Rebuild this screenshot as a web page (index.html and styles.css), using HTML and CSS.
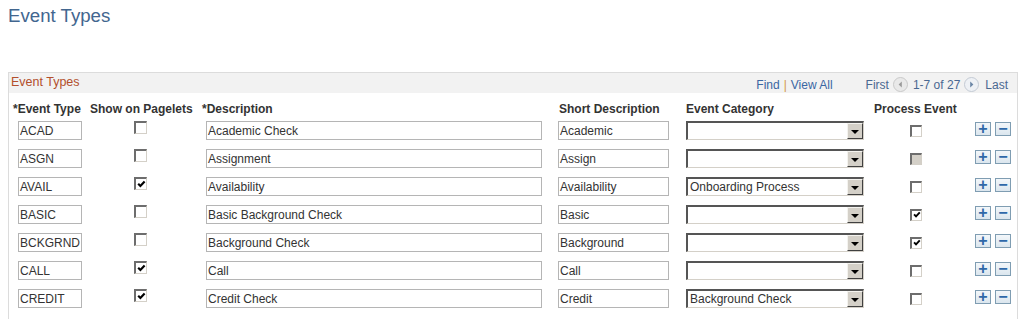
FILE: index.html
```html
<!DOCTYPE html>
<html lang="en">
<head>
  <meta charset="UTF-8" />
  <title>Event Types</title>
  <link rel="stylesheet" href="styles.css">
</head>
<body>
  <h1 class="page-title">Event Types</h1>

  <div class="grid">
    <div class="grid-bar">
      <span class="grid-title">Event Types</span>
      <div class="grid-nav">
        <a class="link">Find</a><span class="sep">|</span><a class="link">View All</a>
        <span class="nav-text first">First</span>
        <svg class="nav-arrow" width="15" height="15" viewBox="0 0 15 15"><circle cx="7.5" cy="7.5" r="7" fill="#e9e9e9" stroke="#c9c9c9"/><path d="M8.8 4.5 L5.6 7.5 L8.8 10.5 Z" fill="#9a9a9a"/></svg>
        <span class="nav-text count">1-7 of 27</span>
        <svg class="nav-arrow" width="15" height="15" viewBox="0 0 15 15"><circle cx="7.5" cy="7.5" r="7" fill="#eef1f5" stroke="#c3cad3"/><path d="M6.2 4.5 L9.4 7.5 L6.2 10.5 Z" fill="#6b86a6"/></svg>
        <span class="nav-text last">Last</span>
      </div>
    </div>

    <div class="grid-head">
      <div class="h-type">*Event Type</div>
      <div class="h-show">Show on Pagelets</div>
      <div class="h-desc">*Description</div>
      <div class="h-short">Short Description</div>
      <div class="h-cat">Event Category</div>
      <div class="h-proc">Process Event</div>
      <div></div>
    </div>

    <div class="grid-rows">
      <div class="grid-row">
        <div><span class="field f-type">ACAD</span></div>
        <div><span class="check c-show"></span></div>
        <div><span class="field f-desc">Academic Check</span></div>
        <div><span class="field f-short">Academic</span></div>
        <div><span class="select"><span class="select-text"></span><span class="select-btn"></span></span></div>
        <div class="proc-cell"><span class="check c-proc"></span></div>
        <div class="actions"><span class="btn">+</span><span class="btn">&minus;</span></div>
      </div>
      <div class="grid-row">
        <div><span class="field f-type">ASGN</span></div>
        <div><span class="check c-show"></span></div>
        <div><span class="field f-desc">Assignment</span></div>
        <div><span class="field f-short">Assign</span></div>
        <div><span class="select"><span class="select-text"></span><span class="select-btn"></span></span></div>
        <div class="proc-cell"><span class="check c-proc disabled"></span></div>
        <div class="actions"><span class="btn">+</span><span class="btn">&minus;</span></div>
      </div>
      <div class="grid-row">
        <div><span class="field f-type">AVAIL</span></div>
        <div><span class="check c-show checked"><svg viewBox="0 0 9 9"><polyline points="1.2,3.8 3.4,6 7.6,1.6"/></svg></span></div>
        <div><span class="field f-desc">Availability</span></div>
        <div><span class="field f-short">Availability</span></div>
        <div><span class="select"><span class="select-text">Onboarding Process</span><span class="select-btn"></span></span></div>
        <div class="proc-cell"><span class="check c-proc"></span></div>
        <div class="actions"><span class="btn">+</span><span class="btn">&minus;</span></div>
      </div>
      <div class="grid-row">
        <div><span class="field f-type">BASIC</span></div>
        <div><span class="check c-show"></span></div>
        <div><span class="field f-desc">Basic Background Check</span></div>
        <div><span class="field f-short">Basic</span></div>
        <div><span class="select"><span class="select-text"></span><span class="select-btn"></span></span></div>
        <div class="proc-cell"><span class="check c-proc checked"><svg viewBox="0 0 9 9"><polyline points="1.2,3.8 3.4,6 7.6,1.6"/></svg></span></div>
        <div class="actions"><span class="btn">+</span><span class="btn">&minus;</span></div>
      </div>
      <div class="grid-row">
        <div><span class="field f-type">BCKGRND</span></div>
        <div><span class="check c-show"></span></div>
        <div><span class="field f-desc">Background Check</span></div>
        <div><span class="field f-short">Background</span></div>
        <div><span class="select"><span class="select-text"></span><span class="select-btn"></span></span></div>
        <div class="proc-cell"><span class="check c-proc checked"><svg viewBox="0 0 9 9"><polyline points="1.2,3.8 3.4,6 7.6,1.6"/></svg></span></div>
        <div class="actions"><span class="btn">+</span><span class="btn">&minus;</span></div>
      </div>
      <div class="grid-row">
        <div><span class="field f-type">CALL</span></div>
        <div><span class="check c-show checked"><svg viewBox="0 0 9 9"><polyline points="1.2,3.8 3.4,6 7.6,1.6"/></svg></span></div>
        <div><span class="field f-desc">Call</span></div>
        <div><span class="field f-short">Call</span></div>
        <div><span class="select"><span class="select-text"></span><span class="select-btn"></span></span></div>
        <div class="proc-cell"><span class="check c-proc"></span></div>
        <div class="actions"><span class="btn">+</span><span class="btn">&minus;</span></div>
      </div>
      <div class="grid-row">
        <div><span class="field f-type">CREDIT</span></div>
        <div><span class="check c-show checked"><svg viewBox="0 0 9 9"><polyline points="1.2,3.8 3.4,6 7.6,1.6"/></svg></span></div>
        <div><span class="field f-desc">Credit Check</span></div>
        <div><span class="field f-short">Credit</span></div>
        <div><span class="select"><span class="select-text">Background Check</span><span class="select-btn"></span></span></div>
        <div class="proc-cell"><span class="check c-proc"></span></div>
        <div class="actions"><span class="btn">+</span><span class="btn">&minus;</span></div>
      </div>
    </div>
  </div>
</body>
</html>
```

FILE: styles.css
```css
/* Basic reset */
* {
  margin: 0;
  padding: 0;
  box-sizing: border-box;
}

body {
  font-family: Arial, 'Liberation Sans', sans-serif;
  font-size: 12px;
  color: #333;
  background-color: #fff;
  padding: 0 5px 0 8px;
}

.page-title {
  font-size: 18.67px;
  font-weight: normal;
  line-height: 21px;
  color: #42668f;
  margin-top: 5px;
}

/* Grid box */
.grid {
  margin-top: 46px;
  border: 1px solid #dcdcdc;
  border-bottom: none;
}

.grid-bar {
  height: 20px;
  background-color: #f2f2f2;
  display: flex;
  justify-content: space-between;
  align-items: flex-start;
  padding: 0 9px 0 2px;
}

.grid-title {
  font-size: 12.5px;
  line-height: 15px;
  padding-top: 2px;
  color: #b34f2c;
}

.grid-nav {
  display: flex;
  align-items: center;
  line-height: 14px;
  padding-top: 4px;
}

.link {
  color: #3a67a3;
}

.sep {
  color: #d39a48;
  margin: 0 4px;
}

.nav-text {
  color: #4a6891;
}

.first {
  margin-left: 33px;
}

.count {
  margin-left: 5px;
}

.last {
  margin-left: 6px;
}

.nav-arrow {
  margin-left: 4px;
}

/* Column layout shared by header and rows */
.grid-head,
.grid-row {
  display: grid;
  grid-template-columns: 79px 110px 354px 128px 188px 100px 49px;
}

.grid-head {
  height: 24px;
  padding-top: 9px;
  line-height: 14px;
  font-weight: bold;
  color: #333;
  white-space: nowrap;
}

.h-type { padding-left: 4px; }
.h-show { padding-left: 2px; }
.h-desc { padding-left: 4px; }
.h-short { padding-left: 7px; }
.h-cat { padding-left: 6px; }
.h-proc { padding-left: 6px; }

.grid-rows {
  padding-bottom: 6px;
}

.grid-row {
  height: 28px;
  padding-top: 4px;
}

/* Edit boxes */
.field {
  display: block;
  height: 19px;
  border: 1px solid #b5b5b5;
  padding-left: 1px;
  line-height: 18px;
  color: #333;
  white-space: nowrap;
  overflow: hidden;
}

.f-type { width: 64px; margin-left: 9px; }
.f-desc { width: 336px; margin-left: 8px; }
.f-short { width: 111px; margin-left: 6px; }

/* Drop-down */
.select {
  display: flex;
  width: 178px;
  height: 19px;
  margin-left: 6px;
  border-top: 2px solid #555;
  border-left: 2px solid #555;
  border-right: 1px solid #d4d0c8;
  border-bottom: 1px solid #d4d0c8;
  background-color: #fff;
}

.select-text {
  flex: 1;
  padding-left: 2px;
  line-height: 16px;
  color: #333;
}

.select-btn {
  width: 16px;
  height: 16px;
  background-color: #d4d0c8;
  border-top: 1px solid #f4f3ef;
  border-left: 1px solid #f4f3ef;
  border-right: 1px solid #404040;
  border-bottom: 1px solid #404040;
  display: flex;
  align-items: center;
  justify-content: center;
}

.select-btn::after {
  content: "";
  border-left: 4px solid transparent;
  border-right: 4px solid transparent;
  border-top: 4px solid #000;
  margin-top: 1px;
}

/* Check boxes */
.check {
  display: flex;
  align-items: center;
  justify-content: center;
  width: 13px;
  height: 13px;
  background-color: #fff;
  border-top: 2px solid #6d6d6d;
  border-left: 2px solid #6d6d6d;
  border-right: 1px solid #d4d0c8;
  border-bottom: 1px solid #d4d0c8;
}

.check svg {
  width: 9px;
  height: 9px;
  fill: none;
  stroke: #000;
  stroke-width: 2.2;
}

.check.disabled {
  background-color: #d4d0c8;
}

.c-show {
  margin-left: 46px;
}

.proc-cell {
  height: 19px;
  display: flex;
  align-items: center;
}

.c-proc {
  width: 12px;
  height: 12px;
  margin-left: 42px;
}

.c-proc svg {
  width: 8px;
  height: 8px;
}

/* Add / delete row buttons */
.actions {
  display: flex;
  gap: 4px;
  padding-left: 7px;
  padding-top: 1px;
}

.btn {
  width: 16px;
  height: 14px;
  border: 1px solid #7f9db2;
  background: linear-gradient(#f3f7fa, #dbe6ee);
  color: #2f68a8;
  font-size: 16px;
  font-weight: bold;
  line-height: 11px;
  text-align: center;
}
```
